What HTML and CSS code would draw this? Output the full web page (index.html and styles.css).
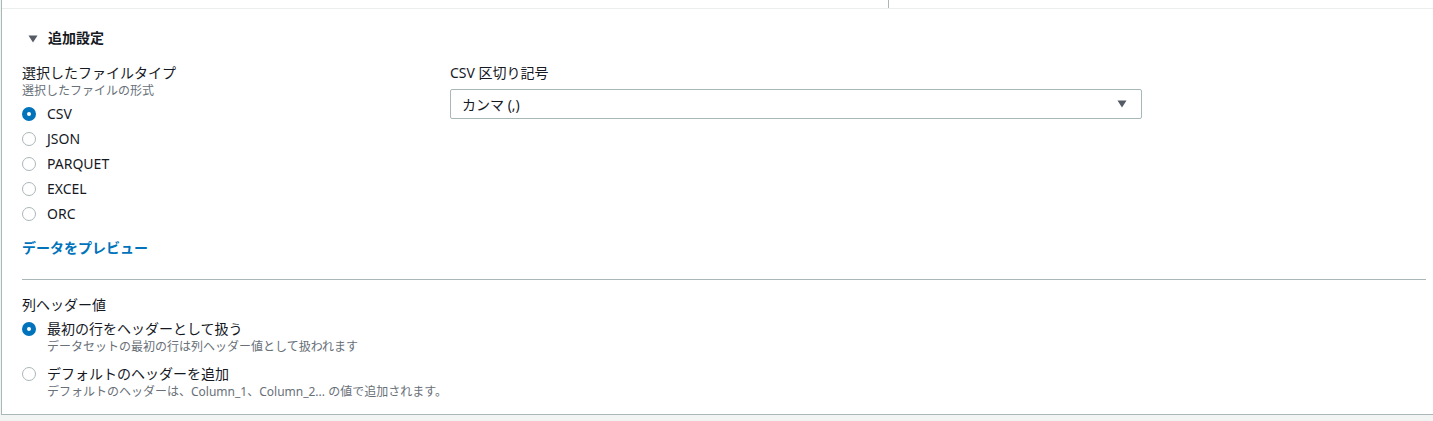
FILE: index.html
```
<!DOCTYPE html>
<html lang="ja">
<head>
    <meta charset="UTF-8">
    <title>追加設定</title>
    <link rel="stylesheet" href="styles.css">
</head>
<body>
    <div class="panel">
        <div class="top-strip">
            <div class="top-cell"></div>
        </div>

        <div class="content">
            <div class="expander">
                <svg class="caret" width="10" height="8" viewBox="0 0 10 8"><polygon points="0.5,0.5 9.5,0.5 5,7.5" fill="#545b64"/></svg>
                <span>追加設定</span>
            </div>

            <div class="form-grid">
                <div class="field">
                    <div class="field-label">選択したファイルタイプ</div>
                    <div class="field-desc">選択したファイルの形式</div>
                    <div class="radio-list">
                        <label class="radio-row"><span class="radio checked"></span>CSV</label>
                        <label class="radio-row"><span class="radio"></span>JSON</label>
                        <label class="radio-row"><span class="radio"></span>PARQUET</label>
                        <label class="radio-row"><span class="radio"></span>EXCEL</label>
                        <label class="radio-row"><span class="radio"></span>ORC</label>
                    </div>
                    <a class="preview-link" href="#">データをプレビュー</a>
                </div>

                <div class="field">
                    <div class="field-label">CSV 区切り記号</div>
                    <div class="select-box">
                        <span>カンマ (,)</span>
                        <svg width="10" height="8" viewBox="0 0 10 8"><polygon points="0.5,0.5 9.5,0.5 5,7.5" fill="#545b64"/></svg>
                    </div>
                </div>
            </div>

            <div class="divider"></div>

            <div class="field-label">列ヘッダー値</div>
            <div class="option-list">
                <div class="option">
                    <span class="radio checked"></span>
                    <div>
                        <div class="option-title">最初の行をヘッダーとして扱う</div>
                        <div class="field-desc">データセットの最初の行は列ヘッダー値として扱われます</div>
                    </div>
                </div>
                <div class="option">
                    <span class="radio"></span>
                    <div>
                        <div class="option-title">デフォルトのヘッダーを追加</div>
                        <div class="field-desc">デフォルトのヘッダーは、Column_1、Column_2... の値で追加されます。</div>
                    </div>
                </div>
            </div>
        </div>
    </div>
</body>
</html>
```

FILE: styles.css
```
body {
    margin: 0;
    background-color: #f2f3f3;
    font-family: "Noto Sans", "Noto Sans CJK JP", sans-serif;
    color: #16191f;
    font-size: 14px;
}

.panel {
    box-sizing: border-box;
    height: 415px;
    margin-left: 1px;
    background-color: #ffffff;
    border-left: 1px solid #aab7b8;
    border-bottom: 1px solid #aab7b8;
}

.top-strip {
    height: 8px;
    border-bottom: 1px solid #eaeded;
    display: flex;
}

.top-cell {
    box-sizing: border-box;
    width: 887px;
    border-right: 1px solid #aab7b8;
}

.content {
    padding: 0 7px 0 20px;
}

.expander {
    display: flex;
    align-items: center;
    margin-top: 19px;
    height: 20px;
    font-weight: 700;
    line-height: 20px;
}

.caret {
    margin: 1px 10px 0 6px;
}

.form-grid {
    display: grid;
    grid-template-columns: 428px 692px;
    margin-top: 15px;
}

.field-label {
    line-height: 20px;
}

.field-desc {
    font-size: 12px;
    line-height: 16px;
    color: #687078;
}

.radio-list {
    margin-top: 2px;
}

.radio-row {
    display: flex;
    align-items: center;
    height: 25px;
}

.radio {
    box-sizing: border-box;
    flex: none;
    width: 14px;
    height: 14px;
    border-radius: 50%;
    border: 1.5px solid #aab7b8;
    background-color: #ffffff;
    margin-right: 11px;
}

.radio.checked {
    border: 5px solid #0073bb;
}

.preview-link {
    display: block;
    margin-top: 12px;
    line-height: 20px;
    font-weight: 700;
    color: #0073bb;
    text-decoration: none;
}

.select-box {
    box-sizing: border-box;
    height: 30px;
    margin-top: 6px;
    padding: 0 14px 0 11px;
    border: 1px solid #aab7b8;
    border-radius: 2px;
    display: flex;
    align-items: center;
    justify-content: space-between;
}

.divider {
    height: 1px;
    background-color: #aab7b8;
    margin: 21px 0 15px 0;
}

.option-list {
    margin-top: 4px;
}

.option {
    display: flex;
    align-items: flex-start;
    margin-bottom: 9px;
}

.option .radio {
    margin-top: 3px;
}

.option-title {
    line-height: 20px;
}
```
